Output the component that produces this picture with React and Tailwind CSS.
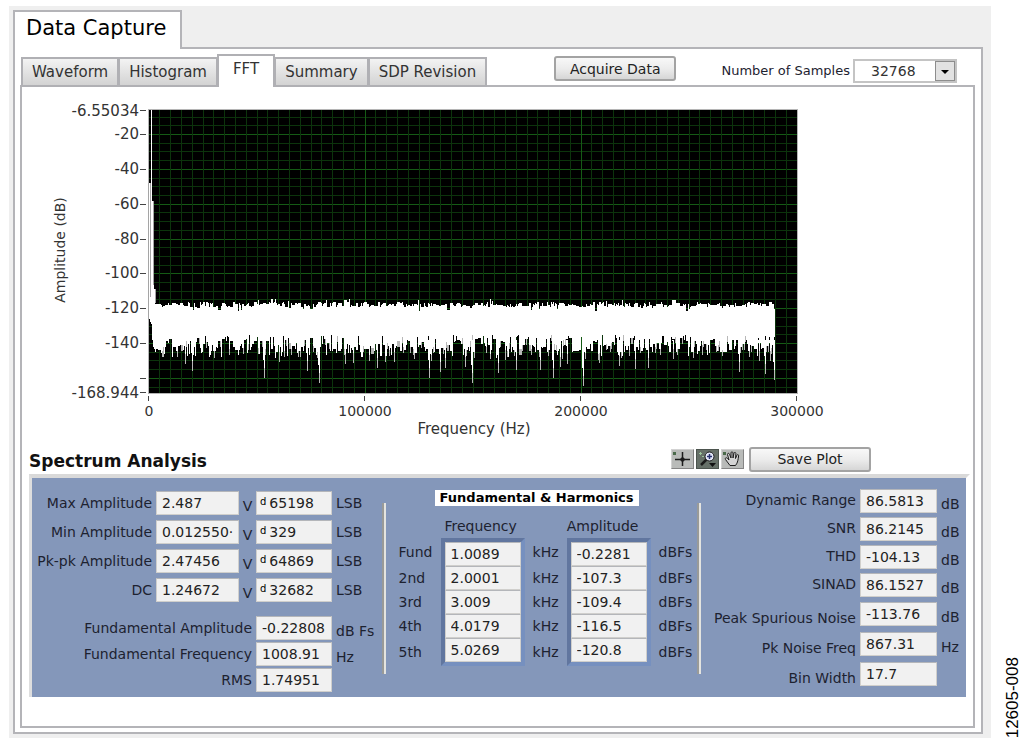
import React, { useState } from 'react';
import clsx from 'clsx';

const TABS = ['Waveform', 'Histogram', 'FFT', 'Summary', 'SDP Revision'];

const AMPLITUDES = [
  { label: 'Max Amplitude', volts: '2.487', code: '65198' },
  { label: 'Min Amplitude', volts: '0.012550·', code: '329' },
  { label: 'Pk-pk Amplitude', volts: '2.47456', code: '64869' },
  { label: 'DC', volts: '1.24672', code: '32682' },
];

const FUNDAMENTALS = [
  { label: 'Fundamental Amplitude', value: '-0.22808', unit: 'dB Fs' },
  { label: 'Fundamental Frequency', value: '1008.91', unit: 'Hz' },
  { label: 'RMS', value: '1.74951', unit: '' },
];

const HARMONICS = [
  { name: 'Fund', freq: '1.0089', amp: '-0.2281' },
  { name: '2nd', freq: '2.0001', amp: '-107.3' },
  { name: '3rd', freq: '3.009', amp: '-109.4' },
  { name: '4th', freq: '4.0179', amp: '-116.5' },
  { name: '5th', freq: '5.0269', amp: '-120.8' },
];

const RATIOS = [
  { label: 'Dynamic Range', value: '86.5813', unit: 'dB' },
  { label: 'SNR', value: '86.2145', unit: 'dB' },
  { label: 'THD', value: '-104.13', unit: 'dB' },
  { label: 'SINAD', value: '86.1527', unit: 'dB' },
];

const NOISE = [
  { label: 'Peak Spurious Noise', value: '-113.76', unit: 'dB' },
  { label: 'Pk Noise Freq', value: '867.31', unit: 'Hz' },
  { label: 'Bin Width', value: '17.7', unit: '' },
];

// Plot area in chart units
const PLOT = { left: 149, right: 797, top: 109, bottom: 393 };
const dbToY = (db) => 134 + (-20 - db) * 1.742;
const hzToX = (hz) => 148.5 + hz * 0.00216;

const Y_TICKS = [-20, -40, -60, -80, -100, -120, -140, -160];
const X_TICKS = [0, 100000, 200000, 300000];

// Deepest bins of the noise floor, x -> y
const DIPS = {
  163: 357, 185: 364, 192: 371, 214: 358, 264: 378, 279: 362, 307: 371, 319: 383,
  345: 364, 353: 363, 377: 368, 394: 362, 429: 378, 440: 372, 445: 368, 465: 367,
  472: 383, 490: 359, 498: 373, 505: 360, 516: 370, 540: 370, 553: 378, 560: 367,
  567: 364, 583: 386, 599: 363, 619: 366, 635: 369, 648: 368, 673: 359, 702: 355,
  739: 372, 759: 361, 765: 374, 770: 361, 774: 380,
};

const makeNoise = () => {
  let seed = 20613;
  const rand = () => {
    seed = (seed * 16807) % 2147483647;
    return seed / 2147483647;
  };
  const wide = [];
  const thin = [];
  let top = 304;
  let bottom = 344;
  let run = 0;
  for (let x = 155; x <= 774; x += 1) {
    if (run === 0) {
      run = 1 + Math.floor(rand() * 3);
      top = 302 + Math.round(rand() * 5);
      if (rand() > 0.92) top += 4;
      if (rand() > 0.93) top -= 3;
      bottom = 338 + Math.round(rand() * 15);
      const r = rand();
      if (r > 0.7) {
        bottom += 5;
        run = 1;
      }
      if (r < 0.15) {
        bottom = 335 + Math.round(r * 20);
        run = 1;
      }
    }
    run -= 1;
    wide.push(`M${x + 0.5} ${top}V${bottom}`);
    if (rand() > 0.8) thin.push(`M${x + 0.5} ${bottom}V${bottom + 6}`);
    if (DIPS[x]) {
      wide.push(`M${x + 0.5} 340V${DIPS[x] - 10}M${x - 0.5} 340V${DIPS[x] - 18}`);
      thin.push(`M${x + 0.5} 340V${DIPS[x]}`);
    }
  }
  return { wide: wide.join(''), thin: thin.join('') };
};

const NOISE_PATHS = makeNoise();

const SpectrumChart = () => {
  const rows = [];
  for (let db = -10; db >= -165; db -= 5) rows.push(db);
  const cols = [];
  for (let hz = 5000; hz < 300000; hz += 5000) cols.push(hz);

  return (
    <svg
      viewBox="40 95 800 345"
      className="block w-[800px] max-w-full text-sm"
      fill="#333"
      role="img"
      aria-label="FFT amplitude against frequency"
    >
      <rect x="148" y="109" width="650" height="285" fill="#b5b5b5" />
      <rect x="149" y="110" width="648" height="283" fill="#000" />
      <g shapeRendering="crispEdges">
        {rows.map((db) => (
          <path
            key={db}
            d={`M${PLOT.left} ${Math.round(dbToY(db)) + 0.5}H${PLOT.right}`}
            stroke={db % 20 === 0 ? '#155a15' : '#0c340c'}
          />
        ))}
        {cols.map((hz) => (
          <path
            key={hz}
            d={`M${Math.round(hzToX(hz)) + 0.5} 110V393`}
            stroke={hz % 100000 === 0 ? '#155a15' : '#0c340c'}
          />
        ))}
        <path d={NOISE_PATHS.thin} stroke="#b8b8b8" />
        <path d={NOISE_PATHS.wide} stroke="#fff" />
        <path d="M149.5 183V319M150.5 297V322M151.5 110V324M152.5 201V340M153.5 285V347M154.5 289V349" stroke="#fff" />
        <path d="M148.5 183V320M150.5 183V297M153.5 201V285M155.5 289V303" stroke="#a5a5a5" />
        {Y_TICKS.map((db) => (
          <path key={db} d={`M140 ${Math.round(dbToY(db)) + 0.5}H146`} stroke="#444" />
        ))}
        <path d="M140 110.5H146M140 392.5H146" stroke="#444" />
        {X_TICKS.map((hz) => (
          <path key={hz} d={`M${Math.round(hzToX(hz)) - 0.5} 396V401`} stroke="#444" />
        ))}
      </g>
      <g textAnchor="end" className="text-[15px]">
        <text x="139" y="116">-6.55034</text>
        {Y_TICKS.slice(0, 7).map((db) => (
          <text key={db} x="139" y={Math.round(dbToY(db)) + 5}>{db}</text>
        ))}
        <text x="139" y="398">-168.944</text>
      </g>
      <g textAnchor="middle">
        {X_TICKS.map((hz) => (
          <text key={hz} x={Math.round(hzToX(hz))} y="416">{hz}</text>
        ))}
        <text x="474" y="434" className="text-[15px]">Frequency (Hz)</text>
        <text transform="translate(65 250) rotate(-90)">Amplitude (dB)</text>
      </g>
    </svg>
  );
};

const ToolButton = ({ label, active, children }) => (
  <button
    type="button"
    aria-label={label}
    className={clsx(
      'h-5 w-[23px] border',
      active
        ? 'bg-[#667068] border-[#4c544e]'
        : 'bg-[#b9bbb9] border-[#d2d2d2] border-b-[#858585] border-r-[#858585]'
    )}
  >
    <svg viewBox="0 0 21 18" className="block w-full" fill="none" stroke="#1c1c1c">
      {children}
    </svg>
  </button>
);

const Field = ({ id, value, label, radix, className }) => (
  <div className={clsx('flex h-6 items-center border border-[#d0cfcc] border-t-[#b4b6ba] bg-[#f1f1f1]', className)}>
    {radix && <span className="pb-px pl-[3px] text-[10px] leading-none text-black">d</span>}
    <input
      id={id}
      aria-label={label}
      readOnly
      value={value}
      className={clsx('w-full min-w-0 bg-transparent text-[#222] outline-none', radix ? 'pl-[3px]' : 'pl-[5px]')}
    />
  </div>
);

const LabelledField = ({ row, unitWidth, width, pitch, labelClass }) => {
  const id = row.label.toLowerCase().replace(/ /g, '-');
  return (
    <div className={clsx('flex items-center justify-end', pitch)}>
      <label htmlFor={id} className={clsx('pr-1 whitespace-nowrap', labelClass)}>{row.label}</label>
      <Field id={id} value={row.value} className={width} />
      <span className={clsx('pl-1 pt-[6px] whitespace-nowrap', unitWidth)}>{row.unit}</span>
    </div>
  );
};

const Divider = () => (
  <div className="mt-[25px] h-[171px] w-1 shrink-0 border-l-2 border-[#999a98] bg-[#e4e4e0]" />
);

const AmplitudeSection = () => (
  <div className="w-[350px] shrink-0 pt-[10px]">
    {AMPLITUDES.map((row) => {
      const id = row.label.toLowerCase().replace(/ /g, '-');
      return (
        <div key={row.label} className="flex h-[29px] items-center">
          <label htmlFor={id} className="w-[124px] pr-1 text-right whitespace-nowrap">{row.label}</label>
          <Field id={id} value={row.volts} className="w-[83px]" />
          <span className="w-[17px] pt-[6px] text-center">V</span>
          <Field label={`${row.label} code`} value={row.code} radix className="w-[76px]" />
          <span className="pl-1">LSB</span>
        </div>
      );
    })}
    <div className="pt-[11px]">
      {FUNDAMENTALS.map((row) => (
        <LabelledField key={row.label} row={row} pitch="h-[26px]" width="w-[76px]" unitWidth="w-[50px]" />
      ))}
    </div>
  </div>
);

const sunkenEdge = (index) =>
  clsx(
    'w-[84px] border-x-4 border-l-[#61769f] border-r-[#7690bf] p-0',
    index === 0 && 'border-t-4 border-t-[#61769f]',
    index === HARMONICS.length - 1 && 'border-b-4 border-b-[#7690bf]'
  );

const HarmonicsSection = () => (
  <div className="mx-auto pt-3 pl-2">
    <h3 className="ml-9 w-fit bg-white px-[5px] text-[13px] leading-4 font-bold text-black">
      Fundamental &amp; Harmonics
    </h3>
    <table className="mt-2 border-separate border-spacing-0">
      <thead>
        <tr className="h-6 leading-6">
          <td />
          <th scope="col" className="pr-1 font-normal">Frequency</th>
          <td />
          <th scope="col" className="pr-3 font-normal">Amplitude</th>
          <td />
        </tr>
      </thead>
      <tbody>
        {HARMONICS.map((row, i) => (
          <tr key={row.name}>
            <th scope="row" className="w-[42px] text-left font-normal">{row.name}</th>
            <td className={sunkenEdge(i)}>
              <Field label={`${row.name} frequency`} value={row.freq} />
            </td>
            <td className="w-[42px] pl-2">kHz</td>
            <td className={sunkenEdge(i)}>
              <Field label={`${row.name} amplitude`} value={row.amp} />
            </td>
            <td className="pl-2">dBFs</td>
          </tr>
        ))}
      </tbody>
    </table>
  </div>
);

const NoiseSection = () => (
  <div className="w-[265px] shrink-0 pt-[9px]">
    {RATIOS.map((row) => (
      <LabelledField key={row.label} row={row} pitch="h-7" width="w-[77px]" unitWidth="w-[29px]" labelClass="pb-[2px]" />
    ))}
    {NOISE.map((row) => (
      <LabelledField key={row.label} row={row} pitch="h-[30px]" width="w-[77px]" unitWidth="w-[29px]" labelClass="pt-2" />
    ))}
  </div>
);

const BUTTON =
  'rounded-[3px] border-2 border-[#a3a3a3] bg-linear-to-b from-[#f8f8f8] via-[#ececec] to-[#d6d6d6] leading-5 text-[#222]';

const App = () => {
  const [tab, setTab] = useState('FFT');
  const [samples, setSamples] = useState('32768');

  return (
    <div className="flex bg-white pt-[6px] pl-[9px] font-['DejaVu_Sans',sans-serif] text-sm text-[#1d2230]">
      <main className="min-w-0 flex-1 bg-[#efefef] pt-1 pr-2 pb-1 pl-1">
        <h1 className="relative -mb-[2px] h-[39px] w-fit border-2 border-b-0 border-[#b4b4b8] bg-white pr-[14px] pl-[11px] text-[21px] leading-8 text-black">
          Data Capture
        </h1>
        <div className="border-2 border-[#b4b4b8] bg-white pt-[5px] pr-[6px] pb-1 pl-[5px]">
          <div className="flex items-end">
            <div role="tablist" className="relative -mb-[2px] flex items-end pl-[2px]">
              {TABS.map((name) => (
                <button
                  key={name}
                  type="button"
                  role="tab"
                  aria-selected={tab === name}
                  onClick={() => setTab(name)}
                  className={clsx(
                    '-ml-[1px] border-2 border-[#b0b0b4] text-[15px] whitespace-nowrap text-[#333]',
                    tab === name
                      ? 'h-[33px] border-b-0 bg-white px-[14px] pb-[3px]'
                      : 'h-[30px] bg-linear-to-b from-[#f3f3f3] to-[#d3d3d3] px-[9px] pt-[2px]'
                  )}
                >
                  {name}
                </button>
              ))}
            </div>
            <button type="button" className={clsx(BUTTON, 'mb-1 ml-[67px] h-[25px] w-[122px]')}>
              Acquire Data
            </button>
            <div className="mb-[2px] ml-auto flex items-center pr-[18px]">
              <label htmlFor="samples" className="pr-[3px] text-[13px] whitespace-nowrap">Number of Samples</label>
              <div className="relative">
                <select
                  id="samples"
                  value={samples}
                  onChange={(e) => setSamples(e.target.value)}
                  className="h-6 w-[104px] appearance-none border-2 border-[#c4c4c4] bg-white pl-4 text-[#333]"
                >
                  <option>16384</option>
                  <option>32768</option>
                  <option>65536</option>
                </select>
                <svg
                  viewBox="0 0 20 20"
                  className="pointer-events-none absolute top-[2px] right-[2px] w-5"
                  aria-hidden="true"
                >
                  <rect x="0.5" y="0.5" width="19" height="19" fill="#e2e2e2" stroke="#8d8d8d" />
                  <path d="M6 9h8l-4 4z" fill="#000" />
                </svg>
              </div>
            </div>
          </div>

          <div className="border-2 border-[#b4b4b8] pt-2 pr-[3px] pb-[29px] pl-[7px]">
            <div className="pl-[11px]">
              <SpectrumChart />
            </div>

            <div className="flex h-[34px] items-center pr-[99px]">
              <h2 className="flex-1 pt-2 text-[17px] leading-6 font-bold text-[#111]">Spectrum Analysis</h2>
              <div className="flex gap-[2px] pt-1">
                <ToolButton label="Cursor">
                  <rect x="1.5" y="2.5" width="2" height="2" fill="#4a6a4a" stroke="#4a6a4a" />
                  <path d="M10.5 2v14M3 9.5h15" strokeWidth="1.5" />
                  <circle cx="10.5" cy="9.5" r="1.8" fill="#1c1c1c" />
                </ToolButton>
                <ToolButton label="Zoom" active>
                  <path d="M2 3.5h3M3.5 2v3M5 6.5h2" stroke="#9cc49c" />
                  <path d="M4 15l6-6" strokeWidth="2.5" />
                  <circle cx="12.5" cy="6.5" r="4.5" fill="#e4e8fa" />
                  <path d="M10 6.5h5M12.5 4v5" stroke="#26306e" strokeWidth="1.5" />
                  <path d="M12 13h7l-3.5 4z" fill="#111" stroke="none" />
                </ToolButton>
                <ToolButton label="Pan">
                  <rect x="1.5" y="2.5" width="2" height="2" fill="#4a6a4a" stroke="#4a6a4a" />
                  <path
                    d="M8 15.5L3.5 9.5c-.8-1.5.8-2.4 1.8-1.2L7 10 5.5 4.5c0-1.5 1.6-1.6 2-.3L9 8V2.800c.1-1.3 1.8-1.3 2 0V8l1-4.800c.4-1.3 1.900-1 1.900.4L13.5 8.5l1.4-3.3c.6-1.2 2-.6 1.7.6-.5 3.4-.6 6.7-3.1 9.7z"
                    fill="#d4d4d4"
                  />
                </ToolButton>
              </div>
              <button type="button" className={clsx(BUTTON, 'mt-1 ml-[5px] h-[25px] w-[122px]')}>
                Save Plot
              </button>
            </div>

            <section className="flex h-[223px] border-t-4 border-r-4 border-l-[3px] border-t-[#d9d9d9] border-r-white border-l-[#dedede] bg-[#8497ba]">
              <AmplitudeSection />
              <Divider />
              <HarmonicsSection />
              <Divider />
              <NoiseSection />
            </section>
          </div>
        </div>
      </main>
      <div className="flex w-[33px] shrink-0 items-end justify-end pr-px">
        <span className="rotate-180 font-['Liberation_Sans',sans-serif] text-[17px] leading-5 text-black [writing-mode:vertical-rl]">
          12605-008
        </span>
      </div>
    </div>
  );
};

export default App;
